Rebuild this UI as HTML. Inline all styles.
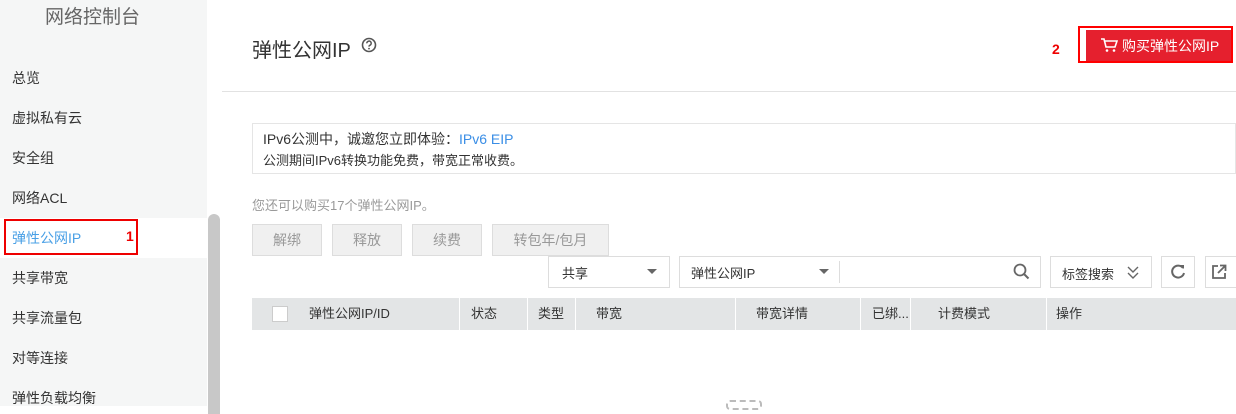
<!DOCTYPE html><html><head><meta charset="utf-8"><style>
*{margin:0;padding:0;box-sizing:border-box}
body{width:1236px;height:406px;overflow:hidden;background:#fff;font-family:"Liberation Sans","Noto Sans CJK SC",sans-serif;position:relative;color:#333}
.a{position:absolute;white-space:nowrap}
.side{left:0;top:0;width:207px;height:406px;background:#f5f6f6}
.si{left:12px;font-size:14px;color:#333}
.btn{top:224px;height:32px;background:#f0f0f0;border:1px solid #ddd;color:#999;font-size:14px;text-align:center;line-height:30px}
.box{border:1px solid #ddd;height:32px;top:256px;background:#fff}
.th{top:298px;height:32px;line-height:32px;font-size:13px;color:#333}
.dv{top:298px;width:1px;height:32px;background:#fff}
</style></head><body>
<div class="a side"></div>
<div class="a" style="left:45px;top:2px;font-size:19px;color:#666">网络控制台</div>
<div class="a si" style="top:68px">总览</div>
<div class="a si" style="top:108px">虚拟私有云</div>
<div class="a si" style="top:148px">安全组</div>
<div class="a si" style="top:188px">网络ACL</div>
<div class="a" style="left:0;top:218px;width:207px;height:40px;background:#fff"></div>
<div class="a" style="left:4px;top:219px;width:134px;height:36px;border:2px solid #e00"></div>
<div class="a si" style="top:228px;color:#4aa0e6">弹性公网IP</div>
<div class="a" style="left:126px;top:228px;font-size:14px;color:#e00;font-weight:bold">1</div>
<div class="a si" style="top:268px">共享带宽</div>
<div class="a si" style="top:308px">共享流量包</div>
<div class="a si" style="top:348px">对等连接</div>
<div class="a si" style="top:388px">弹性负载均衡</div>
<div class="a" style="left:208px;top:214px;width:12px;height:200px;background:#c8c8c8;border-radius:6px 6px 0 0"></div>
<div class="a" style="left:252px;top:34px;font-size:20px;color:#333">弹性公网IP</div>
<svg class="a" style="left:361px;top:37px" width="16" height="16" viewBox="0 0 16 16"><circle cx="8" cy="8" r="6.5" fill="none" stroke="#555" stroke-width="1.6"/><path d="M5.8 6.3a2.2 2.2 0 1 1 3 2c-.6.3-.8.6-.8 1.3" fill="none" stroke="#555" stroke-width="1.5"/><circle cx="8" cy="11.6" r=".9" fill="#555"/></svg>
<div class="a" style="left:1078px;top:26px;width:155px;height:37px;border:2px solid #f00"></div>
<div class="a" style="left:1086px;top:30px;width:145px;height:31px;background:#e5202e"></div>
<svg class="a" style="left:1100px;top:37px" width="18" height="16" viewBox="0 0 18 16"><path d="M1 2h3l2 8h9l2-6H5" fill="none" stroke="#fff" stroke-width="1.6"/><circle cx="7" cy="13.5" r="1.3" fill="#fff"/><circle cx="14" cy="13.5" r="1.3" fill="#fff"/></svg>
<div class="a" style="left:1122px;top:36px;font-size:14px;color:#fff">购买弹性公网IP</div>
<div class="a" style="left:1052px;top:41px;font-size:14px;color:#e00;font-weight:bold">2</div>
<div class="a" style="left:222px;top:91px;width:1014px;height:1px;background:#e2e2e2"></div>
<div class="a" style="left:252px;top:123px;width:984px;height:51px;border:1px solid #e5e5e5"></div>
<div class="a" style="left:263px;top:129px;font-size:14px;color:#333">IPv6公测中，诚邀您立即体验：<span style="color:#3a8ee6">IPv6 EIP</span></div>
<div class="a" style="left:263px;top:150px;font-size:13px;color:#333">公测期间IPv6转换功能免费，带宽正常收费。</div>
<div class="a" style="left:252px;top:195px;font-size:13px;color:#999">您还可以购买17个弹性公网IP。</div>
<div class="a btn" style="left:252px;width:70px">解绑</div>
<div class="a btn" style="left:332px;width:70px">释放</div>
<div class="a btn" style="left:412px;width:70px">续费</div>
<div class="a btn" style="left:492px;width:117px">转包年/包月</div>
<div class="a box" style="left:548px;width:122px"></div>
<div class="a" style="left:562px;top:263px;font-size:13px">共享</div>
<div class="a" style="left:647px;top:269px;border:5px solid transparent;border-top:5px solid #666"></div>
<div class="a box" style="left:679px;width:362px"></div>
<div class="a" style="left:691px;top:263px;font-size:13px">弹性公网IP</div>
<div class="a" style="left:819px;top:269px;border:5px solid transparent;border-top:5px solid #666"></div>
<div class="a" style="left:839px;top:261px;width:1px;height:22px;background:#ddd"></div>
<svg class="a" style="left:1013px;top:263px" width="17" height="17" viewBox="0 0 17 17"><circle cx="7" cy="7" r="5.5" fill="none" stroke="#666" stroke-width="1.8"/><path d="M11 11l4.5 4.5" stroke="#666" stroke-width="2"/></svg>
<div class="a box" style="left:1050px;width:102px"></div>
<div class="a" style="left:1062px;top:264px;font-size:13px">标签搜索</div>
<svg class="a" style="left:1127px;top:266px" width="12" height="13" viewBox="0 0 12 13"><path d="M1 1l5 5 5-5M1 7l5 5 5-5" fill="none" stroke="#666" stroke-width="1.4"/></svg>
<div class="a box" style="left:1161px;width:34px"></div>
<svg class="a" style="left:1170px;top:263px" width="16" height="17" viewBox="0 0 16 17"><path d="M13 5A6 6 0 1 0 14 10" fill="none" stroke="#666" stroke-width="2"/><path d="M10 2l4 0 0 4z" fill="#666"/></svg>
<div class="a box" style="left:1205px;width:36px"></div>
<svg class="a" style="left:1211px;top:264px" width="16" height="16" viewBox="0 0 16 16"><path d="M7 2H2v12h12V9" fill="none" stroke="#666" stroke-width="1.8"/><path d="M7 9l7-7M9 1.5h5.5V7" fill="none" stroke="#666" stroke-width="1.8"/></svg>
<div class="a" style="left:252px;top:298px;width:984px;height:32px;background:#e3e5e6"></div>
<div class="a" style="left:272px;top:306px;width:16px;height:16px;border:1px solid #ccc;background:#fff"></div>
<div class="a th" style="left:309px">弹性公网IP/ID</div>
<div class="a dv" style="left:459px"></div><div class="a th" style="left:471px">状态</div>
<div class="a dv" style="left:527px"></div><div class="a th" style="left:538px">类型</div>
<div class="a dv" style="left:575px"></div><div class="a th" style="left:596px">带宽</div>
<div class="a dv" style="left:735px"></div><div class="a th" style="left:756px">带宽详情</div>
<div class="a dv" style="left:860px"></div><div class="a th" style="left:872px">已绑...</div>
<div class="a dv" style="left:910px"></div><div class="a th" style="left:938px">计费模式</div>
<div class="a dv" style="left:1046px"></div><div class="a th" style="left:1056px">操作</div>
<div class="a" style="left:726px;top:400px;width:36px;height:10px;border:2px dashed #bbb;border-radius:4px"></div>
</body></html>
